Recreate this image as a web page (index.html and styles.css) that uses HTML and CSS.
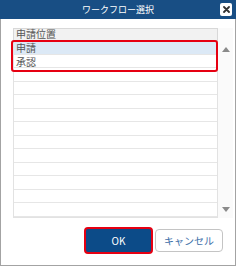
FILE: index.html
```html
<!DOCTYPE html>
<html lang="ja">

<head>
    <meta charset="UTF-8">
    <title>ワークフロー選択</title>
    <link rel="stylesheet" href="styles.css">
</head>

<body>
    <div class="dialog">
        <div class="title-bar">
            <span class="title">ワークフロー選択</span>
            <span class="close-btn">
                <svg width="7" height="7" viewBox="0 0 7 7">
                    <path d="M1 1L6 6M6 1L1 6" stroke="#333" stroke-width="1.8" stroke-linecap="round" />
                </svg>
            </span>
        </div>
        <div class="content">
            <div class="list-wrap">
                <div class="grid">
                    <div class="grid-head">申請位置</div>
                    <div class="grid-row selected">申請</div>
                    <div class="grid-row">承認</div>
                    <div class="grid-row"></div>
                    <div class="grid-row"></div>
                    <div class="grid-row"></div>
                    <div class="grid-row"></div>
                    <div class="grid-row"></div>
                    <div class="grid-row"></div>
                    <div class="grid-row"></div>
                    <div class="grid-row"></div>
                    <div class="grid-row"></div>
                    <div class="grid-row"></div>
                    <div class="grid-row"></div>
                    <div class="mark mark-rows"></div>
                </div>
                <div class="scrollbar">
                    <span class="arrow up"></span>
                    <span class="arrow down"></span>
                </div>
            </div>
            <div class="buttons">
                <button class="btn btn-ok">OK</button>
                <button class="btn btn-cancel">キャンセル</button>
            </div>
        </div>
    </div>
</body>

</html>
```

FILE: styles.css
```css
* {
    box-sizing: border-box;
}

body {
    margin: 0;
    font-family: "Noto Sans CJK JP", "Noto Sans", sans-serif;
    background: #fff;
}

.dialog {
    width: 236px;
    height: 266px;
    border: 1px solid #a3a3a3;
    border-top: none;
    display: flex;
    flex-direction: column;
    background: #fff;
}

.title-bar {
    height: 19px;
    margin: 0 -1px;
    background: #184e84;
    display: flex;
    align-items: center;
    justify-content: center;
    position: relative;
}

.title {
    color: #fff;
    font-size: 9px;
    line-height: 19px;
}

.close-btn {
    position: absolute;
    right: 4px;
    top: 3px;
    width: 12px;
    height: 13px;
    background: #fff;
    border-radius: 2px;
    display: flex;
    align-items: center;
    justify-content: center;
}

.content {
    flex: 1;
    padding: 9px 1px 0 12px;
    display: flex;
    flex-direction: column;
}

.list-wrap {
    display: flex;
    height: 190px;
}

.grid {
    position: relative;
    width: 205px;
    border: 1px solid #e2e2e2;
    border-top: none;
}

.grid-head {
    height: 13px;
    margin: 0 -1px;
    padding-left: 2px;
    background: #f2f2f2;
    border: 1px solid #d8d8d8;
    font-size: 10px;
    line-height: 9px;
    color: #555;
}

.grid-row {
    height: 14px;
    padding-left: 2px;
    border-bottom: 1px solid #e6e6e6;
    font-size: 10px;
    line-height: 14px;
    color: #555;
}

.grid-row:nth-child(odd) {
    height: 13px;
}

.grid-row.selected {
    background: #dce9f6;
}

.mark {
    position: absolute;
    border: 2px solid #e60012;
    border-radius: 3px;
}

.mark-rows {
    left: -3px;
    top: 12px;
    width: 207px;
    height: 32px;
}

.scrollbar {
    width: 15px;
    background: #fafafa;
    display: flex;
    flex-direction: column;
    justify-content: space-between;
    align-items: center;
    padding: 19px 0 6px;
}

.arrow {
    width: 0;
    height: 0;
    border-left: 4px solid transparent;
    border-right: 4px solid transparent;
}

.arrow.up {
    border-bottom: 5px solid #8a8a8a;
}

.arrow.down {
    border-top: 5px solid #8a8a8a;
}

.buttons {
    display: flex;
    justify-content: flex-end;
    gap: 2px;
    padding: 11px 11px 0 0;
}

.btn {
    height: 23px;
    font-family: inherit;
    font-size: 10px;
    border-radius: 4px;
    padding: 0;
    cursor: pointer;
}

.btn-ok {
    width: 69px;
    height: 27px;
    margin-top: -2px;
    background: #0c4b88;
    color: #fff;
    border: 2px solid #e60012;
    border-radius: 4px;
    box-shadow: inset 0 0 0 1px #0c4b88;
}

.btn-cancel {
    width: 68px;
    background: #fff;
    color: #3b6ea8;
    border: 1px solid #c4c4c4;
}
```
